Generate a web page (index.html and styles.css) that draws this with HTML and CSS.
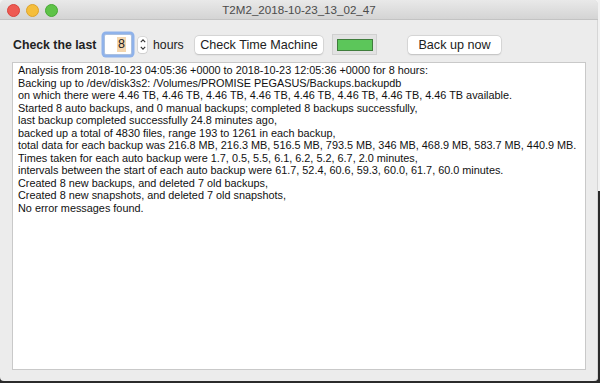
FILE: index.html
```html
<!DOCTYPE html>
<html>
<head>
<meta charset="utf-8">
<link rel="stylesheet" href="styles.css">
</head>
<body>
<div class="window">
  <div class="titlebar">
    <div class="lights">
      <span class="light red"></span>
      <span class="light yellow"></span>
      <span class="light green"></span>
    </div>
    <div class="title">T2M2_2018-10-23_13_02_47</div>
  </div>
  <div class="toolbar">
    <span class="label">Check the last</span>
    <div class="field"><span class="sel">8</span></div>
    <div class="stepper">
      <svg width="8" height="15" viewBox="0 0 8 15"><path d="M1.8 5.2 L4 2.8 L6.2 5.2" fill="none" stroke="#333" stroke-width="1.1"/><path d="M1.8 9.8 L4 12.2 L6.2 9.8" fill="none" stroke="#333" stroke-width="1.1"/></svg>
    </div>
    <span class="unit">hours</span>
    <button class="btn check">Check Time Machine</button>
    <div class="status"><div class="status-fill"></div></div>
    <button class="btn backup">Back up now</button>
  </div>
  <div class="textview">
    <div class="line">Analysis from 2018-10-23 04:05:36 +0000 to 2018-10-23 12:05:36 +0000 for 8 hours:</div>
    <div class="line">Backing up to /dev/disk3s2: /Volumes/PROMISE PEGASUS/Backups.backupdb</div>
    <div class="line">on which there were 4.46 TB, 4.46 TB, 4.46 TB, 4.46 TB, 4.46 TB, 4.46 TB, 4.46 TB, 4.46 TB available.</div>
    <div class="line">Started 8 auto backups, and 0 manual backups; completed 8 backups successfully,</div>
    <div class="line">last backup completed successfully 24.8 minutes ago,</div>
    <div class="line">backed up a total of 4830 files, range 193 to 1261 in each backup,</div>
    <div class="line">total data for each backup was 216.8 MB, 216.3 MB, 516.5 MB, 793.5 MB, 346 MB, 468.9 MB, 583.7 MB, 440.9 MB.</div>
    <div class="line">Times taken for each auto backup were 1.7, 0.5, 5.5, 6.1, 6.2, 5.2, 6.7, 2.0 minutes,</div>
    <div class="line">intervals between the start of each auto backup were 61.7, 52.4, 60.6, 59.3, 60.0, 61.7, 60.0 minutes.</div>
    <div class="line">Created 8 new backups, and deleted 7 old backups,</div>
    <div class="line">Created 8 new snapshots, and deleted 7 old snapshots,</div>
    <div class="line">No error messages found.</div>
  </div>
</div>
</body>
</html>
```
FILE: styles.css
```css
html, body {
  margin: 0;
  padding: 0;
}
body {
  width: 600px;
  height: 383px;
  background: linear-gradient(#f2f2f2 0, #f2f2f2 50%, #2b2b2b 50%, #2b2b2b 100%);
  font-family: "Liberation Sans", Arial, sans-serif;
  overflow: hidden;
}
.window {
  width: 598px;
  height: 381px;
  background: #ececec;
  border-radius: 5px 5px 4px 4px;
  overflow: hidden;
  display: flex;
  flex-direction: column;
  box-shadow: inset -1px 0 0 #d6d6d6;
}
.titlebar {
  height: 19px;
  flex: none;
  display: flex;
  align-items: center;
  background: linear-gradient(#e9e9e9, #d4d4d4);
  border-bottom: 1px solid #c3c3c3;
  position: relative;
}
.lights {
  display: flex;
  gap: 6px;
  padding-left: 7px;
  margin-top: 1px;
}
.light {
  width: 11px;
  height: 11px;
  border-radius: 50%;
  display: block;
}
.light.red { background: #ee5a52; border: 0.5px solid #d8443d; }
.light.yellow { background: #f5be3b; border: 0.5px solid #dca22a; }
.light.green { background: #5ec348; border: 0.5px solid #47a835; }
.title {
  position: absolute;
  left: 0;
  right: 0;
  top: 0;
  height: 20px;
  line-height: 20px;
  text-align: center;
  font-size: 11.6px;
  color: #4b4b4b;
}
.toolbar {
  flex: none;
  height: 33px;
  padding-top: 8px;
  display: flex;
  align-items: center;
  padding-left: 13px;
  font-size: 12.3px;
  color: #222;
}
.label {
  font-weight: bold;
  width: 83px;
  white-space: nowrap;
}
.field {
  margin-left: 8px;
  width: 21px;
  height: 19px;
  background: #fff;
  border: 1px solid #aac0e0;
  box-shadow: 0 0 0 2.5px #8fb2ea;
  border-radius: 2px;
  display: flex;
  align-items: center;
  justify-content: flex-end;
  padding-right: 5px;
  font-size: 12.5px;
  color: #222;
}
.sel {
  background: #f4d6ae;
  padding: 0 1px;
  line-height: 15px;
}
.stepper {
  margin-left: 6px;
  width: 9px;
  height: 16px;
  background: #fff;
  border-radius: 3px;
  box-shadow: 0 0 0 0.5px #c6c6c6, 0 0.5px 1px rgba(0,0,0,0.15);
  display: flex;
  align-items: center;
  justify-content: center;
}
.unit {
  margin-left: 6px;
  width: 31px;
  white-space: nowrap;
}
.btn {
  font-family: "Liberation Sans", Arial, sans-serif;
  font-size: 12.6px;
  color: #222;
  background: #fff;
  border: none;
  border-radius: 4px;
  box-shadow: 0 0 0 0.5px #c8c8c8, 0 0.5px 1.5px rgba(0,0,0,0.2);
  height: 18px;
  padding: 0;
  line-height: 18px;
  margin: 0;
}
.check {
  margin-left: 11px;
  width: 128px;
}
.status {
  margin-left: 9px;
  width: 45px;
  height: 21px;
  background: #e2e2e2;
  border: 1px solid #d0d0d0;
  box-sizing: border-box;
  display: flex;
  align-items: center;
  justify-content: center;
}
.status-fill {
  width: 34px;
  height: 10px;
  background: #5cc65a;
  border: 1px solid #3f7d3c;
}
.backup {
  margin-left: 31px;
  width: 93px;
}
.textview {
  flex: 1;
  margin: 1px 12px 11px 12px;
  background: #fff;
  border: 1px solid #c9c9c9;
  padding: 1px 5px;
  font-size: 10.87px;
  line-height: 12.55px;
  color: #111;
}
.line {
  white-space: nowrap;
}
```
